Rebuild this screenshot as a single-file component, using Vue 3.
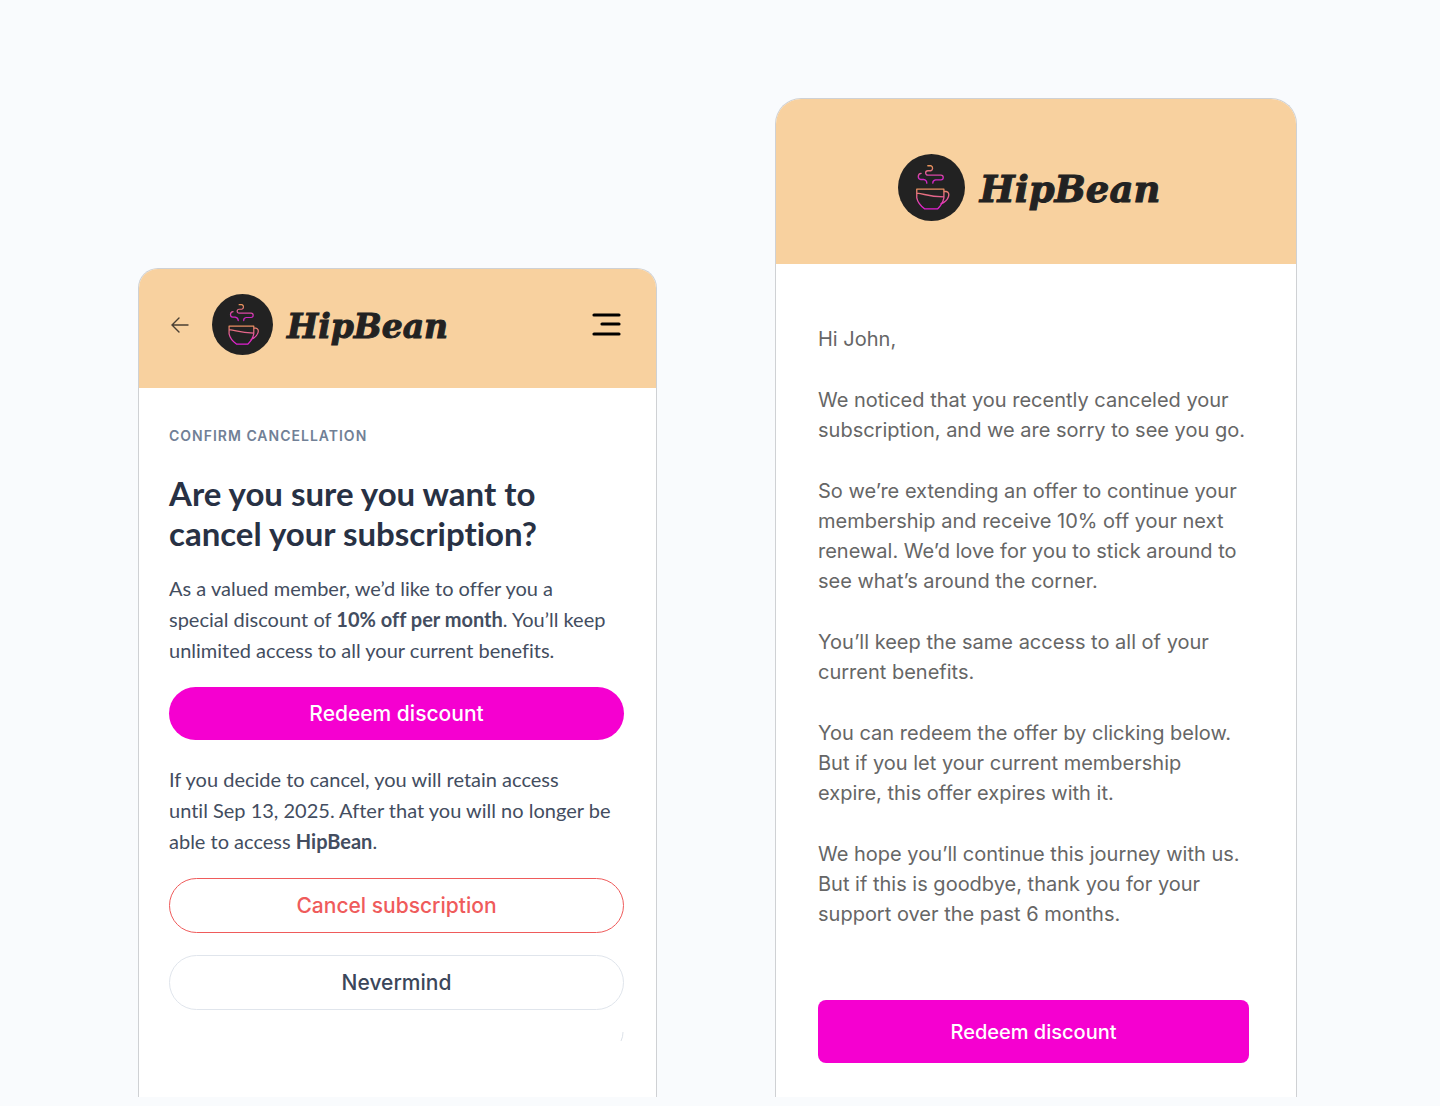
<script setup>
import { h } from 'vue'

const letter = [
  ['Hi John,'],
  ['We noticed that you recently canceled your', 'subscription, and we are sorry to see you go.'],
  ['So we’re extending an offer to continue your', 'membership and receive 10% off your next', 'renewal. We’d love for you to stick around to', 'see what’s around the corner.'],
  ['You’ll keep the same access to all of your', 'current benefits.'],
  ['You can redeem the offer by clicking below.', 'But if you let your current membership', 'expire, this offer expires with it.'],
  ['We hope you’ll continue this journey with us.', 'But if this is goodbye, thank you for your', 'support over the past 6 months.'],
]

const CupLogo = (props) =>
  h('svg', { viewBox: '0 0 200 200', 'aria-hidden': 'true' }, [
    h('defs', [
      h('linearGradient', { id: props.gid + 'c', gradientUnits: 'userSpaceOnUse', x1: 0, y1: 103, x2: 0, y2: 160 }, [
        h('stop', { offset: '0', 'stop-color': '#e8935c' }),
        h('stop', { offset: '1', 'stop-color': '#e01fd0' }),
      ]),
      h('linearGradient', { id: props.gid + 's', gradientUnits: 'userSpaceOnUse', x1: 0, y1: 38, x2: 0, y2: 74 }, [
        h('stop', { offset: '0', 'stop-color': '#e8935c' }),
        h('stop', { offset: '1', 'stop-color': '#d126c4' }),
      ]),
    ]),
    h('circle', { cx: 100, cy: 100, r: 100, fill: '#222' }),
    h('g', { fill: 'none', 'stroke-width': 4, 'stroke-linecap': 'round', 'stroke-linejoin': 'round' }, [
      h('path', { stroke: `url(#${props.gid}c)`, d: 'M56 105H137V131Q133 150 118 164H80Q60 150 56 131ZM57 117C80 119 88 127 137 128M137 112H144C158 114 153 139 128 149' }),
      h('path', { stroke: `url(#${props.gid}s)`, d: 'M89 35H98A8 8 0 0 1 98 50H89A6 6 0 0 0 89 63H128A7 7 0 0 1 128 77H112Q103 79 104 87M69 58C58 59 58 75 68 76H76Q86 78 86 87' }),
    ]),
  ])
CupLogo.props = ['gid']
</script>

<template>
  <main class="stage">
    <section class="card portal">
      <header class="bar">
        <button class="icon back" aria-label="Back">
          <svg width="18" height="16" viewBox="0 0 18 16"><path d="M17 8H1M8 1L1 8l7 7" /></svg>
        </button>
        <div class="brand small">
          <CupLogo gid="a" class="cup" />
          <span class="word">HipBean</span>
        </div>
        <button class="icon menu" aria-label="Menu">
          <svg width="30" height="24" viewBox="0 0 30 24"><path d="M2 2H27M10 11H27M2 21H27" /></svg>
        </button>
      </header>
      <div class="content">
        <p class="eyebrow">CONFIRM CANCELLATION</p>
        <h1>Are you sure you want to<br />cancel your subscription?</h1>
        <p class="copy">As a valued member, we’d like to offer you a<br />special discount of <strong>10% off per month</strong>. You’ll keep<br />unlimited access to all your current benefits.</p>
        <button class="pill primary">Redeem discount</button>
        <p class="copy">If you decide to cancel, you will retain access<br />until Sep 13, 2025. After that you will no longer be<br />able to access <strong>HipBean</strong>.</p>
        <button class="pill danger">Cancel subscription</button>
        <button class="pill plain">Nevermind</button>
        <svg class="tick" width="4" height="10" viewBox="0 0 4 10" aria-hidden="true"><path d="M3 0Q3 5 1 9" /></svg>
      </div>
    </section>

    <article class="card mail">
      <header class="banner">
        <div class="brand large">
          <CupLogo gid="b" class="cup" />
          <span class="word">HipBean</span>
        </div>
      </header>
      <div class="letter">
        <p v-for="(lines, i) in letter" :key="i">
          <template v-for="(line, j) in lines" :key="j"><br v-if="j" />{{ line }}</template>
        </p>
        <button class="redeem">Redeem discount</button>
      </div>
    </article>
  </main>
</template>

<style>
body {
  margin: 0;
  background: #f9fbfd;
}
</style>

<style scoped>
.stage {
  display: grid;
  grid-template-columns: 519fr 522fr;
  column-gap: 118px;
  align-items: end;
  padding: 98px 143px 9px 138px;
  font-family: Inter, "Liberation Sans", sans-serif;
}
.card {
  box-sizing: border-box;
  background: #fff;
  border: 1px solid #cfd1d4;
  border-bottom: 0;
  overflow: hidden;
  white-space: nowrap;
}
.portal {
  border-radius: 20px 20px 0 0;
}
.mail {
  border-radius: 26px 26px 0 0;
}
button {
  font-family: inherit;
  cursor: pointer;
}
.bar,
.banner {
  display: flex;
  align-items: center;
  background: #f8d19f;
}
.bar {
  height: 119px;
  padding: 0 34px 8px 32px;
  box-sizing: border-box;
}
.banner {
  height: 165px;
  justify-content: center;
}
.icon {
  display: flex;
  padding: 0;
  border: 0;
  background: none;
}
.icon path {
  fill: none;
  stroke-linecap: round;
}
.back path {
  stroke: #4a3f33;
  stroke-width: 1.4;
}
.menu {
  margin-left: auto;
}
.menu path {
  stroke: #000;
  stroke-width: 3.2;
}
.brand {
  display: flex;
  align-items: center;
  color: #222;
}
.word {
  padding-top: 3px;
  font-family: "DejaVu Serif", serif;
  font-weight: 700;
  font-style: italic;
  -webkit-text-stroke: 1px #222;
}
.small {
  gap: 14px;
  margin-left: 23px;
}
.small .cup {
  width: 61px;
  height: 61px;
}
.small .word {
  font-size: 33px;
}
.large {
  gap: 15px;
  padding: 12px 14px 0 0;
}
.large .cup {
  width: 67px;
  height: 67px;
}
.large .word {
  font-size: 37px;
}
.content {
  display: flex;
  flex-direction: column;
  padding: 38px 32px 55px 30px;
}
p,
h1 {
  margin: 0;
}
.eyebrow {
  color: #718096;
  font-size: 14px;
  line-height: 20px;
  font-weight: 600;
  letter-spacing: 1px;
}
h1 {
  margin-top: 27px;
  color: #283144;
  font-family: Lato, sans-serif;
  font-size: 33px;
  line-height: 40px;
  font-weight: 700;
  font-variant-ligatures: none;
}
.copy {
  margin: 20px 0 21px;
  color: #434d60;
  font-family: Lato, sans-serif;
  font-size: 20px;
  line-height: 31px;
  font-variant-ligatures: none;
}
.pill {
  height: 55px;
  border-radius: 28px;
  font-size: 21px;
  font-weight: 500;
  margin-bottom: 22px;
}
.primary {
  height: 53px;
  margin-bottom: 4px;
  border: 0;
  background: #f500d0;
  color: #fff;
}
.danger {
  border: 1px solid #ef5b5b;
  background: #fff;
  color: #ef5b5b;
}
.plain {
  border: 1px solid #e0e5ec;
  background: #fff;
  color: #3b465a;
}
.tick {
  align-self: flex-end;
}
.tick path {
  fill: none;
  stroke: #dde2e9;
}
.letter {
  display: flex;
  flex-direction: column;
  gap: 31px;
  padding: 60px 47px 34px 42px;
  color: #666;
  font-size: 20px;
  line-height: 30px;
}
.redeem {
  height: 63px;
  margin-top: 40px;
  border: 0;
  border-radius: 8px;
  background: #f500d0;
  color: #fff;
  font-size: 20px;
  font-weight: 500;
}
</style>
